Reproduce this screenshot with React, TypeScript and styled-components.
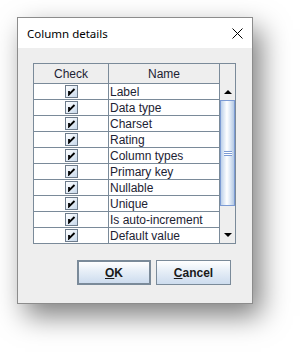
import React from "react";
import styled, { createGlobalStyle } from "styled-components";

const GlobalStyle = createGlobalStyle`
  html, body {
    margin: 0;
    padding: 0;
    background: #ffffff;
  }
  body {
    font-family: "Liberation Sans", Arial, sans-serif;
  }
`;

const grid = "#7a8a99";

const Page = styled.div`
  padding: 17px 0 0 17px;
  width: 301px;
  height: 352px;
  box-sizing: border-box;
`;

const Dialog = styled.div`
  width: 236px;
  height: 287px;
  box-sizing: border-box;
  border: 1px solid #8c8c8c;
  background: #eeeeee;
  box-shadow: 8px 12px 26px rgba(0, 0, 0, 0.5);
  display: flex;
  flex-direction: column;
`;

const TitleBar = styled.div`
  height: 30px;
  background: #ffffff;
  display: flex;
  align-items: center;
  justify-content: space-between;
  padding: 0 9px 0 9px;
`;

const Title = styled.span`
  font-family: "Noto Sans", sans-serif;
  font-size: 11.5px;
  color: #000000;
`;

const Body = styled.div`
  padding: 15px 16px 0 15px;
  display: flex;
  flex-direction: column;
`;

const TableFrame = styled.div`
  width: 203px;
  height: 181px;
  box-sizing: border-box;
  border: 1px solid ${grid};
  background: #ffffff;
  display: flex;
`;

const Table = styled.div`
  width: 185px;
  display: flex;
  flex-direction: column;
`;

const HeaderRow = styled.div`
  display: flex;
  height: 19px;
  border-bottom: 1px solid ${grid};
  background: #eeeeee;
`;

const Row = styled.div`
  display: flex;
  height: 15px;
  border-bottom: 1px solid ${grid};
  &:last-child {
    border-bottom: none;
  }
`;

const CheckCell = styled.div`
  width: 74px;
  border-right: 1px solid ${grid};
  display: flex;
  align-items: center;
  justify-content: center;
`;

const NameCell = styled.div<{ $header?: boolean }>`
  flex: 1;
  display: flex;
  align-items: center;
  justify-content: ${(p) => (p.$header ? "center" : "flex-start")};
  padding-left: ${(p) => (p.$header ? "0" : "1px")};
  font-size: 12px;
  color: #1c2233;
  white-space: nowrap;
  overflow: hidden;
`;

const HeaderText = styled.span`
  font-size: 12px;
  color: #1c2233;
`;

const Box = styled.div`
  width: 11px;
  height: 11px;
  border: 1px solid #6e7c8c;
  background: linear-gradient(135deg, #ffffff 0%, #e4edf7 50%, #c8d8ea 100%);
  display: flex;
  align-items: center;
  justify-content: center;
`;

const ScrollColumn = styled.div`
  width: 15px;
  border-left: 1px solid ${grid};
  background: #eeeeee;
  display: flex;
  flex-direction: column;
`;

const Corner = styled.div`
  height: 20px;
`;

const ArrowButton = styled.div`
  height: 16px;
  display: flex;
  align-items: center;
  justify-content: center;
  background: #eeeeee;
`;

const Thumb = styled.div`
  height: 106px;
  box-sizing: border-box;
  border: 1px solid #7c9bd4;
  background: linear-gradient(90deg, #bcd0ea 0%, #ffffff 45%, #e6eef8 65%, #b4c9e4 100%);
  display: flex;
  align-items: center;
  justify-content: center;
`;

const Grip = styled.div`
  width: 8px;
  height: 5px;
  background: repeating-linear-gradient(
    180deg,
    #7c9bd4 0px,
    #7c9bd4 1px,
    #ffffff 1px,
    #ffffff 2px
  );
`;

const Track = styled.div`
  flex: 1;
`;

const ButtonRow = styled.div`
  display: flex;
  justify-content: flex-end;
  gap: 5px;
  margin-top: 16px;
  padding-right: 5px;
`;

const Button = styled.div<{ $default?: boolean }>`
  width: ${(p) => (p.$default ? "74px" : "75px")};
  height: 25px;
  box-sizing: border-box;
  border: ${(p) => (p.$default ? "2px" : "1px")} solid ${grid};
  background: linear-gradient(180deg, #ffffff 0%, #e6eef7 45%, #cddcee 100%);
  display: flex;
  align-items: center;
  justify-content: center;
  font-size: 12px;
  font-weight: bold;
  color: #1a1a1a;
`;

const Mnemonic = styled.span`
  text-decoration: underline;
`;

const items = [
  "Label",
  "Data type",
  "Charset",
  "Rating",
  "Column types",
  "Primary key",
  "Nullable",
  "Unique",
  "Is auto-increment",
  "Default value",
];

const CloseIcon = () => (
  <svg width="11" height="11" viewBox="0 0 11 11">
    <path d="M0.5 0.5 L10.5 10.5 M10.5 0.5 L0.5 10.5" stroke="#000" strokeWidth="1" />
  </svg>
);

const CheckMark = () => (
  <svg width="9" height="9" viewBox="0 0 9 9">
    <path d="M2 4 L2 7.5 L7.5 2" stroke="#000" strokeWidth="1.8" fill="none" />
  </svg>
);

const Arrow: React.FC<{ up?: boolean }> = ({ up }) => (
  <svg width="8" height="4" viewBox="0 0 8 4">
    <path d={up ? "M0 4 L4 0 L8 4 Z" : "M0 0 L8 0 L4 4 Z"} fill="#000" />
  </svg>
);

export default function App() {
  return (
    <Page>
      <GlobalStyle />
      <Dialog>
        <TitleBar>
          <Title>Column details</Title>
          <CloseIcon />
        </TitleBar>
        <Body>
          <TableFrame>
            <Table>
              <HeaderRow>
                <CheckCell>
                  <HeaderText>Check</HeaderText>
                </CheckCell>
                <NameCell $header>Name</NameCell>
              </HeaderRow>
              {items.map((name) => (
                <Row key={name}>
                  <CheckCell>
                    <Box>
                      <CheckMark />
                    </Box>
                  </CheckCell>
                  <NameCell>{name}</NameCell>
                </Row>
              ))}
            </Table>
            <ScrollColumn>
              <Corner />
              <ArrowButton>
                <Arrow up />
              </ArrowButton>
              <Thumb>
                <Grip />
              </Thumb>
              <Track />
              <ArrowButton>
                <Arrow />
              </ArrowButton>
            </ScrollColumn>
          </TableFrame>
          <ButtonRow>
            <Button $default>
              <Mnemonic>O</Mnemonic>K
            </Button>
            <Button>
              <Mnemonic>C</Mnemonic>ancel
            </Button>
          </ButtonRow>
        </Body>
      </Dialog>
    </Page>
  );
}
